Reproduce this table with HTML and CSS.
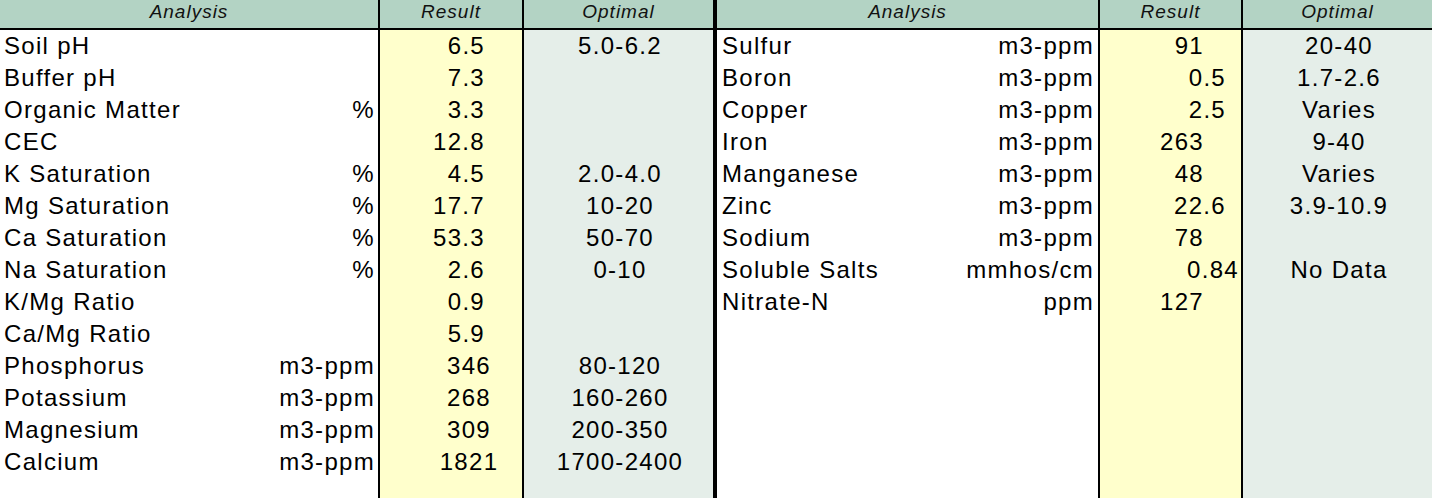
FILE: index.html
```html
<!DOCTYPE html>
<html lang="en">
<head>
  <meta charset="UTF-8">
  <title>Soil Analysis</title>
  <link rel="stylesheet" href="styles.css">
</head>
<body>
  <div class="sheet">
    <div class="panel panel-left">
      <div class="hd">Analysis</div><div class="hd">Result</div><div class="hd">Optimal</div>

      <div class="lab"><span>Soil pH</span><span></span></div><div class="res">6.5</div><div class="opt">5.0-6.2</div>
      <div class="lab"><span>Buffer pH</span><span></span></div><div class="res">7.3</div><div class="opt"></div>
      <div class="lab"><span>Organic Matter</span><span>%</span></div><div class="res">3.3</div><div class="opt"></div>
      <div class="lab"><span>CEC</span><span></span></div><div class="res">12.8</div><div class="opt"></div>
      <div class="lab"><span>K Saturation</span><span>%</span></div><div class="res">4.5</div><div class="opt">2.0-4.0</div>
      <div class="lab"><span>Mg Saturation</span><span>%</span></div><div class="res">17.7</div><div class="opt">10-20</div>
      <div class="lab"><span>Ca Saturation</span><span>%</span></div><div class="res">53.3</div><div class="opt">50-70</div>
      <div class="lab"><span>Na Saturation</span><span>%</span></div><div class="res">2.6</div><div class="opt">0-10</div>
      <div class="lab"><span>K/Mg Ratio</span><span></span></div><div class="res">0.9</div><div class="opt"></div>
      <div class="lab"><span>Ca/Mg Ratio</span><span></span></div><div class="res">5.9</div><div class="opt"></div>
      <div class="lab"><span>Phosphorus</span><span>m3-ppm</span></div><div class="res int">346</div><div class="opt">80-120</div>
      <div class="lab"><span>Potassium</span><span>m3-ppm</span></div><div class="res int">268</div><div class="opt">160-260</div>
      <div class="lab"><span>Magnesium</span><span>m3-ppm</span></div><div class="res int">309</div><div class="opt">200-350</div>
      <div class="lab"><span>Calcium</span><span>m3-ppm</span></div><div class="res int">1821</div><div class="opt">1700-2400</div>

      <div class="lab"></div><div class="res"></div><div class="opt"></div>
    </div>

    <div class="panel panel-right">
      <div class="hd">Analysis</div><div class="hd">Result</div><div class="hd">Optimal</div>

      <div class="lab"><span>Sulfur</span><span>m3-ppm</span></div><div class="res int">91</div><div class="opt">20-40</div>
      <div class="lab"><span>Boron</span><span>m3-ppm</span></div><div class="res">0.5</div><div class="opt">1.7-2.6</div>
      <div class="lab"><span>Copper</span><span>m3-ppm</span></div><div class="res">2.5</div><div class="opt">Varies</div>
      <div class="lab"><span>Iron</span><span>m3-ppm</span></div><div class="res int">263</div><div class="opt">9-40</div>
      <div class="lab"><span>Manganese</span><span>m3-ppm</span></div><div class="res int">48</div><div class="opt">Varies</div>
      <div class="lab"><span>Zinc</span><span>m3-ppm</span></div><div class="res">22.6</div><div class="opt">3.9-10.9</div>
      <div class="lab"><span>Sodium</span><span>m3-ppm</span></div><div class="res int">78</div><div class="opt"></div>
      <div class="lab"><span>Soluble Salts</span><span>mmhos/cm</span></div><div class="res two">0.84</div><div class="opt">No Data</div>
      <div class="lab"><span>Nitrate-N</span><span>ppm</span></div><div class="res int">127</div><div class="opt"></div>

      <div class="lab"></div><div class="res"></div><div class="opt"></div>
    </div>
  </div>
</body>
</html>
```

FILE: styles.css
```css
* { box-sizing: border-box; }
html, body {
  margin: 0;
  height: 100%;
  overflow: hidden;
  background: #fff;
}
body {
  font-family: "Liberation Sans", Arial, sans-serif;
  color: #000;
}
.sheet {
  display: flex;
  height: 498px;
}
.panel {
  display: grid;
  height: 100%;
  grid-template-rows: 30px repeat(14, 32px) 1fr;
}
.panel-left {
  grid-template-columns: 380px 144px 189px;
  border-right: 4px solid #000;
}
.panel-right {
  grid-template-columns: 383px 143px 189px;
  grid-template-rows: 30px repeat(9, 32px) 1fr;
}
.panel > :nth-child(3n+1),
.panel > :nth-child(3n+2) {
  border-right: 2px solid #000;
}
.hd {
  background: #b3d3c4;
  border-bottom: 2px solid #000;
  color: #111;
  font-size: 19px;
  font-style: italic;
  letter-spacing: 1px;
  line-height: 24px;
  text-align: center;
}
.lab, .res, .opt {
  font-size: 24px;
  letter-spacing: 1.3px;
  line-height: 31px;
  white-space: nowrap;
}
.lab {
  display: flex;
  justify-content: space-between;
  padding: 0 3px 0 4px;
  background: #fff;
}
.panel-right .lab {
  padding: 0 4px 0 5px;
}
.res {
  background: #ffffcc;
  text-align: right;
  padding-right: 37px;
}
.panel-left .res.int {
  text-align: center;
  padding: 0 0 0 36px;
}
.panel-right .res {
  padding-right: 15px;
}
.panel-right .res.int {
  padding-right: 37px;
}
.panel-right .res.two {
  padding-right: 2px;
}
.opt {
  background: #e5eee9;
  text-align: center;
  padding-left: 3px;
}
```
